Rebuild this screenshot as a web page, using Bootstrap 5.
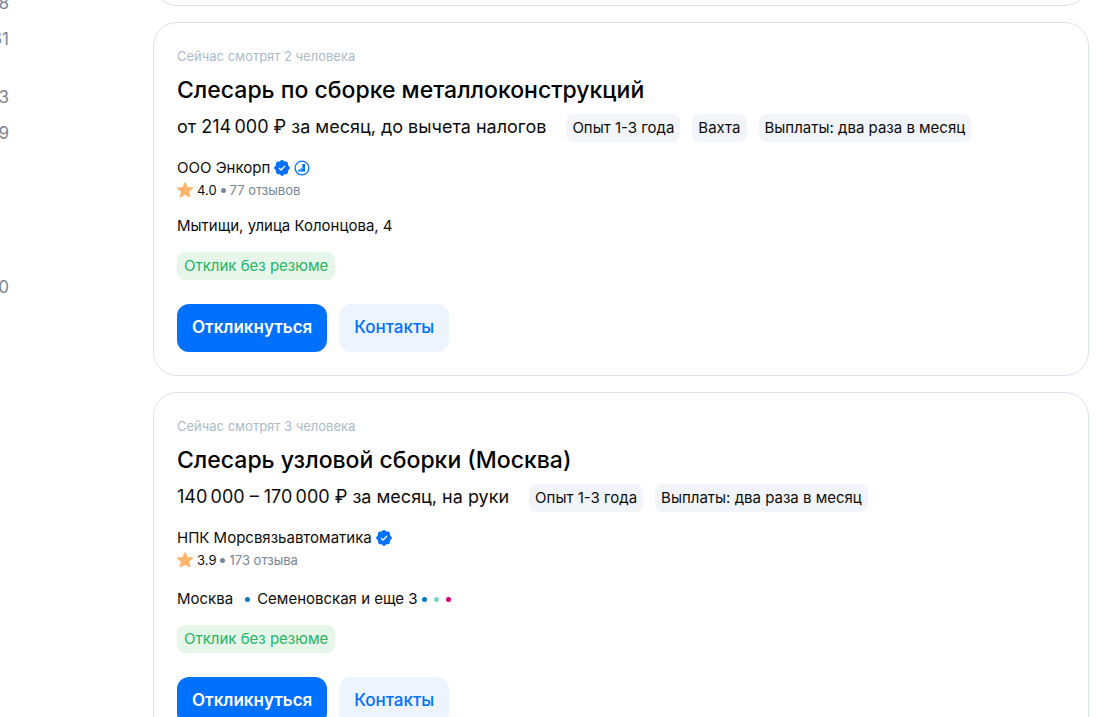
<!DOCTYPE html>
<html lang="ru">
<head>
<meta charset="utf-8">
<meta name="viewport" content="width=device-width, initial-scale=1">
<title>Вакансии слесаря</title>
<link href="https://cdn.jsdelivr.net/npm/bootstrap@5.3.0/dist/css/bootstrap.min.css" rel="stylesheet">
<style>
body { font-family: Inter, "Liberation Sans", sans-serif; font-size: 15px; line-height: 24px; color: #0d0d0d; }
a { color: inherit; text-decoration: none; }
.page { height: 100vh; }
.filters { flex: 0 0 153px; }
.facets { width: 9px; margin-top: -9px; color: #768694; font-size: 17px; }
.facets li { height: 24px; display: flex; justify-content: flex-end; margin-bottom: 12px; }
.facets .group-end { margin-bottom: 34px; }
.facets .group-last { margin-bottom: 130px; }
.results { min-width: 0; padding-right: 9px; }
.vacancy { border: 1px solid #dce3eb; border-radius: 24px; padding: 23px; }
.previous { height: 6px; }
.previous .vacancy { height: 80px; }
.watching { color: #aabbca; font-size: 13px; line-height: 20px; }
.vacancy h2 { font-size: 23px; line-height: 32px; font-weight: 500; color: #000; }
.salary { font-size: 18px; line-height: 26px; margin-right: 20px; }
.block { margin-top: 14px; }
.pill { padding: 2px 6px; border-radius: 8px; background: #f1f4f9; white-space: nowrap; }
.pill-green { padding: 2px 7px; background: #e6f7e9; color: #23b566; }
.rating { font-size: 13px; line-height: 20px; }
.muted { color: #768694; }
.dot { width: 5px; height: 5px; border-radius: 50%; background: #768694; }
.dot-blue { background: #0078bf; }
.dot-aqua { background: #82cfd0; }
.dot-pink { background: #d6006e; }
.metro { margin-top: 17px; }
.metro .dot { margin-right: 7px; }
.action { height: 48px; padding: 0 15px; border: 0; border-radius: 12px; font-size: 17px; font-weight: 600; }
.action-main, .action-main:hover { background: #0070ff; color: #fff; }
.action-soft, .action-soft:hover { background: #ebf4ff; color: #0070ff; font-weight: 500; }
</style>
</head>
<body>
<svg class="d-none" aria-hidden="true">
  <symbol id="verified" viewBox="0 0 16 16">
    <path fill="#0070ff" d="M6.7.6a1.8 1.8 0 0 1 2.6 0l.6.6c.3.3.7.4 1.1.4h.9c1.200 0 2.100 1 2.100 2.100v.9c0 .4.1.8.4 1.100l.8.9a1.900 1.900 0 0 1 0 2.700l-.8.8c-.3.3-.4.7-.4 1.100v.9c0 1.200-.9 2.100-2.100 2.100H11c-.4 0-.8.1-1.100.4l-.6.6a1.800 1.800 0 0 1-2.600 0l-.6-.6a1.500 1.500 0 0 0-1.100-.4h-.9A2.100 2.100 0 0 1 2 12.100v-.9c0-.4-.1-.8-.4-1.100l-.8-.8a1.900 1.900 0 0 1 0-2.700l.8-.9c.3-.3.4-.7.4-1.100v-.9c0-1.100.9-2.100 2.100-2.100H5c.4 0 .8-.1 1.100-.4z"/>
    <path d="m5 8 2 2 4-4" fill="none" stroke="#fff" stroke-width="1.300"/>
  </symbol>
  <symbol id="accredited" viewBox="0 0 16 16">
    <circle cx="8" cy="8" r="6.900" fill="none" stroke="#0070ff" stroke-width="1.300"/>
    <path fill="#0070ff" d="M8.300 4H11v7.500H4V9.600h2.500V8.300h1.800z"/>
    <path d="M4 10h3.200l1.300-2H10" fill="none" stroke="#fff" stroke-width=".4"/>
  </symbol>
  <symbol id="star" viewBox="0 0 16 16">
    <path fill="#ffb46b" stroke="#ffb46b" stroke-width="1.600" stroke-linejoin="round" d="m8 1 2 4.700 5.200.4-4 3.400 1.300 5L8 11.900l-4.500 2.600 1.300-5-4-3.400L6 5.700z"/>
  </symbol>
</svg>
<div class="page d-flex overflow-hidden">
  <aside class="filters">
    <ul class="facets list-unstyled mb-0 overflow-hidden">
      <li>8</li>
      <li class="group-end">61</li>
      <li>3</li>
      <li class="group-last">9</li>
      <li>0</li>
    </ul>
  </aside>
  <main class="results flex-grow-1">
    <div class="previous d-flex align-items-end overflow-hidden mb-3"><div class="vacancy w-100"></div></div>

    <article class="vacancy mb-3">
      <div class="watching mb-2">Сейчас смотрят 2 человека</div>
      <h2 class="mb-2"><a href="#">Слесарь по сборке металлоконструкций</a></h2>
      <div class="d-flex flex-wrap">
        <span class="salary">от 214&#8239;000 ₽ за месяц, до вычета налогов</span>
        <span class="pill me-2">Опыт 1-3 года</span>
        <span class="pill ms-1 me-2">Вахта</span>
        <span class="pill ms-1">Выплаты: два раза в месяц</span>
      </div>
      <div class="block d-flex align-items-center gap-1">
        <a href="#">ООО Энкорп</a>
        <svg width="16" height="16"><use href="#verified"/></svg>
        <svg width="16" height="16"><use href="#accredited"/></svg>
      </div>
      <div class="rating d-flex align-items-center gap-1">
        <svg width="16" height="16"><use href="#star"/></svg>
        <span>4.0</span><span class="dot"></span><a class="muted" href="#">77 отзывов</a>
      </div>
      <div class="block">Мытищи, улица Колонцова, 4</div>
      <div class="block d-flex"><span class="pill pill-green">Отклик без резюме</span></div>
      <div class="d-flex mt-4">
        <button type="button" class="btn action action-main me-2">Откликнуться</button>
        <button type="button" class="btn action action-soft ms-1">Контакты</button>
      </div>
    </article>

    <article class="vacancy">
      <div class="watching mb-2">Сейчас смотрят 3 человека</div>
      <h2 class="mb-2"><a href="#">Слесарь узловой сборки (Москва)</a></h2>
      <div class="d-flex flex-wrap">
        <span class="salary">140&#8239;000 – 170&#8239;000 ₽ за месяц, на руки</span>
        <span class="pill me-2">Опыт 1-3 года</span>
        <span class="pill ms-1">Выплаты: два раза в месяц</span>
      </div>
      <div class="block d-flex align-items-center gap-1">
        <a href="#">НПК Морсвязьавтоматика</a>
        <svg width="16" height="16"><use href="#verified"/></svg>
      </div>
      <div class="rating d-flex align-items-center gap-1">
        <svg width="16" height="16"><use href="#star"/></svg>
        <span>3.9</span><span class="dot"></span><a class="muted" href="#">173 отзыва</a>
      </div>
      <div class="metro d-flex align-items-center">
        <span class="me-2 pe-1">Москва</span><span class="dot dot-blue"></span><span class="me-1">Семеновская и еще 3</span>
        <span class="dot dot-blue"></span><span class="dot dot-aqua"></span><span class="dot dot-pink"></span>
      </div>
      <div class="block d-flex"><span class="pill pill-green">Отклик без резюме</span></div>
      <div class="d-flex mt-4">
        <button type="button" class="btn action action-main me-2">Откликнуться</button>
        <button type="button" class="btn action action-soft ms-1">Контакты</button>
      </div>
    </article>
  </main>
</div>
<script src="https://cdn.jsdelivr.net/npm/bootstrap@5.3.0/dist/js/bootstrap.bundle.min.js"></script>
</body>
</html>
